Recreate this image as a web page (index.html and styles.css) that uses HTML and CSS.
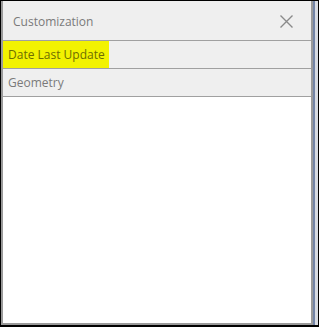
FILE: index.html
```html
<!DOCTYPE html>
<html lang="en">
<head>
    <meta charset="UTF-8">
    <meta name="viewport" content="width=device-width, initial-scale=1.0">
    <title>Customization</title>
    <link rel="stylesheet" href="styles.css">
</head>
<body>
    <div class="window">
        <div class="panel">
            <div class="panel-header">
                <span class="panel-title">Customization</span>
                <button class="close-btn" aria-label="Close">
                    <svg width="13" height="13" viewBox="0 0 13 13">
                        <path d="M0.5 0.5 L12.5 12.5 M12.5 0.5 L0.5 12.5" stroke="#8a8a8a" stroke-width="1.4" fill="none"/>
                    </svg>
                </button>
            </div>
            <div class="field-row"><span class="marker">Date Last Update</span></div>
            <div class="field-row"><span class="field-name">Geometry</span></div>
            <div class="panel-body"></div>
        </div>
        <div class="edge"></div>
    </div>
</body>
</html>
```

FILE: styles.css
```css
body {
    margin: 0;
    font-family: 'Open Sans', sans-serif;
    background: #000;
}
.window {
    width: 319px;
    height: 327px;
    box-sizing: border-box;
    border: 1px solid #000;
    border-bottom-width: 2px;
    display: flex;
}
.panel {
    flex: 1;
    display: flex;
    flex-direction: column;
    background: #fff;
    border: 2px solid #9a9a9a;
    border-top: none;
}
.panel-header {
    height: 40px;
    box-sizing: border-box;
    display: flex;
    align-items: center;
    justify-content: space-between;
    padding: 2px 18px 0 10px;
    background: #efefef;
    border-bottom: 1px solid #a0a0a0;
}
.panel-title {
    font-size: 12px;
    color: #7a7a7a;
}
.close-btn {
    border: none;
    background: none;
    padding: 0;
    display: flex;
    cursor: pointer;
}
.field-row {
    height: 28px;
    box-sizing: border-box;
    display: flex;
    align-items: center;
    background: #efefef;
    border-bottom: 1px solid #a0a0a0;
    font-size: 12px;
    color: #7a7a7a;
}
.field-name {
    padding-left: 5px;
}
.marker {
    background: #f2f200;
    color: #6e6e00;
    padding: 5px 4px 5px 5px;
}
.panel-body {
    flex: 1;
}
.edge {
    width: 3px;
    border-left: 2px solid #7384a6;
    background: #d8dbe2;
}
```
